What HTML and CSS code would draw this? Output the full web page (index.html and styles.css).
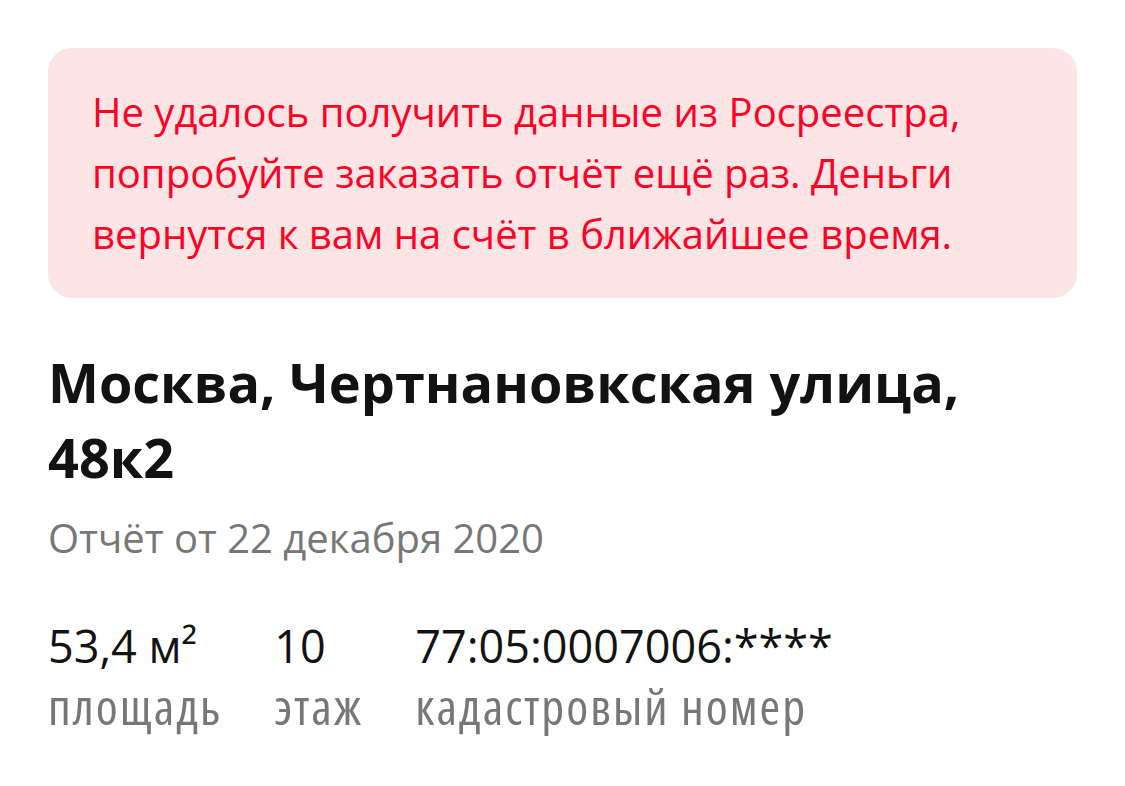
FILE: index.html
```html
<!DOCTYPE html>
<html lang="ru">
<head>
<meta charset="utf-8">
<title>Отчёт</title>
<link rel="stylesheet" href="styles.css">
</head>
<body>
<main class="page">
  <div class="alert">Не удалось получить данные из Росреестра, попробуйте заказать отчёт ещё раз. Деньги вернутся к вам на счёт в ближайшее время.</div>
  <h1 class="title">Москва, Чертнановкская улица, 48к2</h1>
  <div class="subtitle">Отчёт от 22 декабря 2020</div>
  <div class="stats">
    <div class="stat">
      <div class="stat-value">53,4 м²</div>
      <div class="stat-label">площадь</div>
    </div>
    <div class="stat">
      <div class="stat-value">10</div>
      <div class="stat-label">этаж</div>
    </div>
    <div class="stat">
      <div class="stat-value">77:05:0007006:****</div>
      <div class="stat-label">кадастровый номер</div>
    </div>
  </div>
</main>
</body>
</html>
```

FILE: styles.css
```css
html, body {
  margin: 0;
  padding: 0;
  background: #ffffff;
}
body {
  font-family: "Open Sans", "Noto Sans", sans-serif;
  -webkit-font-smoothing: antialiased;
}
.page {
  padding: 48px 48px 0 48px;
  width: 1029px;
}
.alert {
  background: #fde4e5;
  border-radius: 24px;
  color: #ff0025;
  font-size: 40px;
  line-height: 61px;
  padding: 33px 44px 34px 44px;
}
.title {
  margin: 47px 0 0 0;
  font-size: 54px;
  line-height: 75px;
  font-weight: 700;
  color: #121212;
}
.subtitle {
  margin-top: 18px;
  font-size: 40px;
  line-height: 50px;
  color: #777777;
}
.stats {
  display: flex;
  gap: 52px;
  margin-top: 53px;
}
.stat-value {
  font-size: 45px;
  line-height: 60px;
  color: #121212;
}
.stat-label {
  font-size: 50px;
  line-height: 60px;
  font-stretch: 75%;
  letter-spacing: 2px;
  color: #777777;
}
```
